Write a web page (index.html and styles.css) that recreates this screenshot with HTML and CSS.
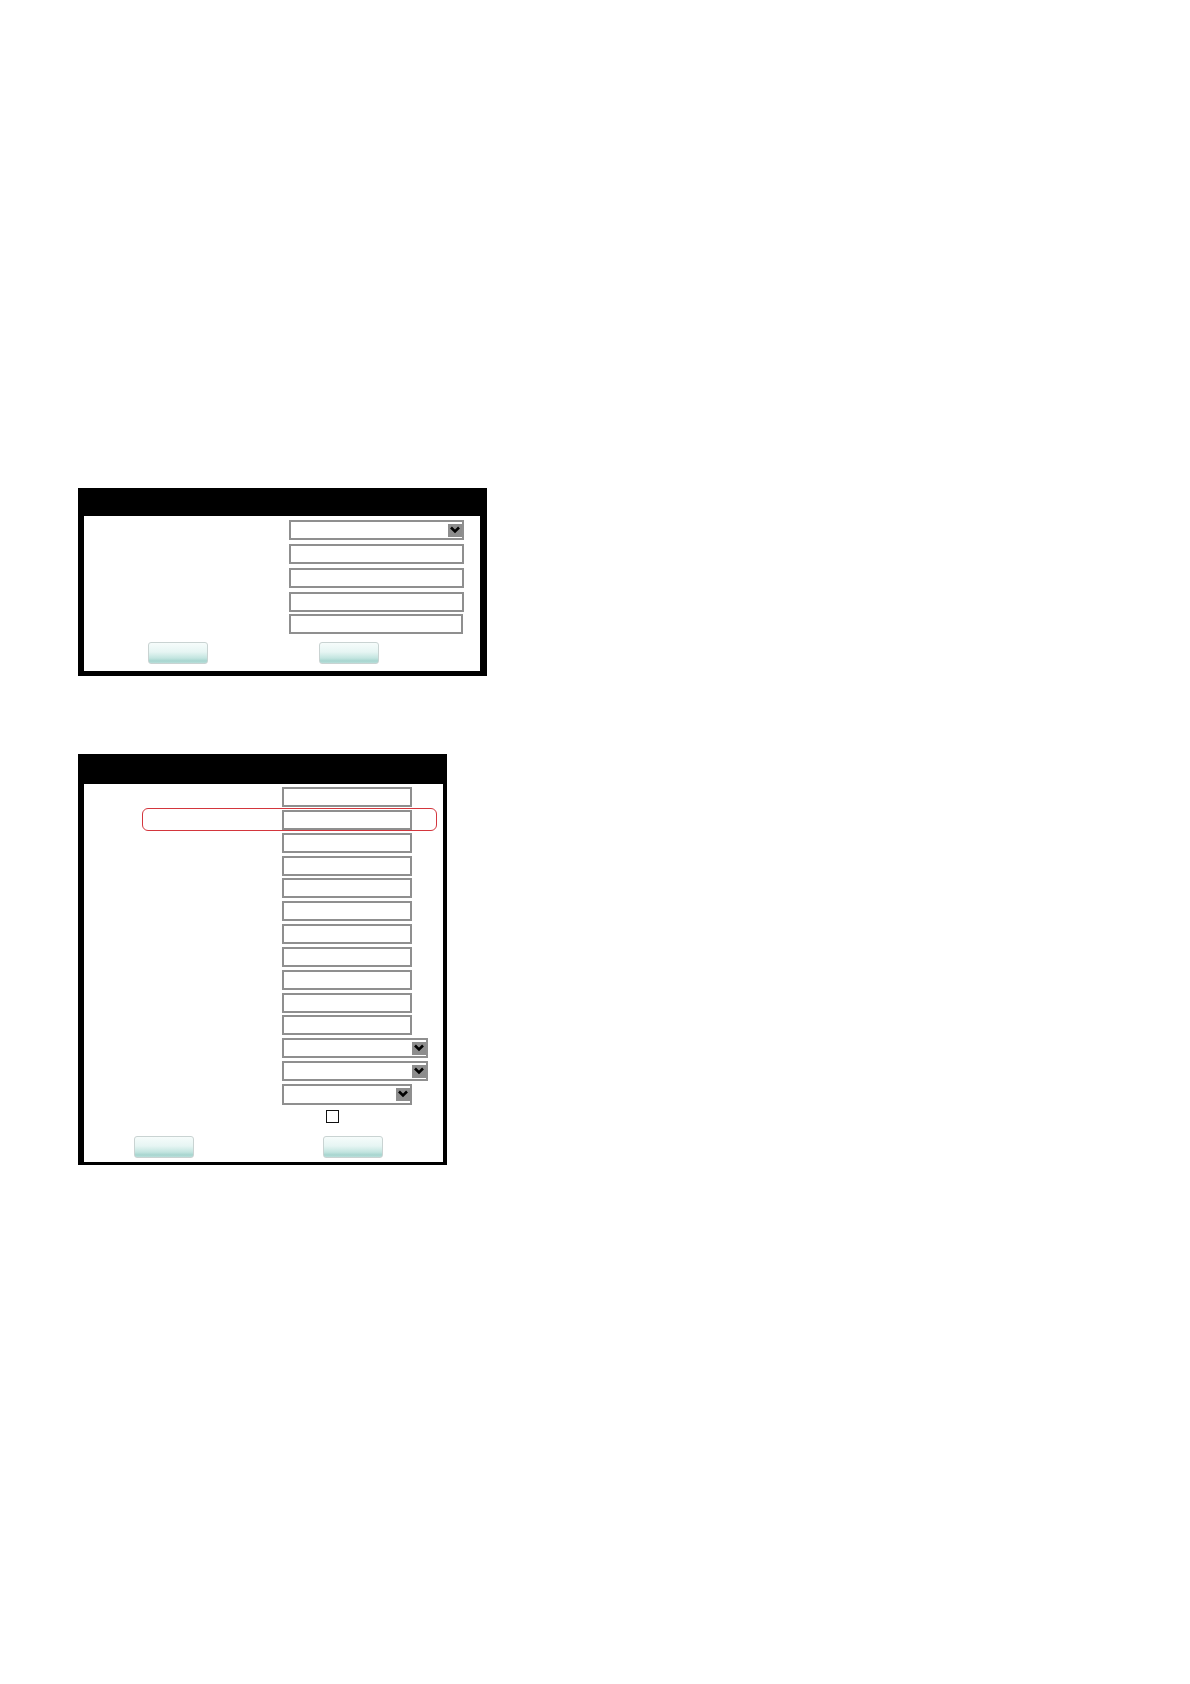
FILE: index.html
```html
<!DOCTYPE html>
<html lang="en">
<head>
<meta charset="utf-8">
<title>Forms</title>
<link rel="stylesheet" href="styles.css">
</head>
<body>
<div class="page">
  <section class="panel panel-a">
    <div class="panel-head"></div>
    <div class="panel-body">
      <div class="fields">
        <div class="select w175"><span class="arrow"><svg viewBox="0 0 12 10" width="12" height="10"><path d="M2 2.5 L6 6.5 L10 2.5" fill="none" stroke="#000" stroke-width="2.6"/></svg></span></div>
        <input class="text w175" type="text">
        <input class="text w175" type="text">
        <input class="text w175" type="text">
        <input class="text w174 tight" type="text">
      </div>
      <div class="buttons">
        <span class="btn b1"></span>
        <span class="btn b2"></span>
      </div>
    </div>
  </section>

  <section class="panel panel-b">
    <div class="panel-head"></div>
    <div class="panel-body">
      <div class="fields">
        <input class="text w130" type="text">
        <div class="row-hl"><input class="text w130" type="text"><span class="highlight"></span></div>
        <input class="text w130" type="text">
        <input class="text w130" type="text">
        <input class="text w130" type="text">
        <input class="text w130" type="text">
        <input class="text w130" type="text">
        <input class="text w130" type="text">
        <input class="text w130" type="text">
        <input class="text w130" type="text">
        <input class="text w130" type="text">
        <div class="select w146"><span class="arrow"><svg viewBox="0 0 12 10" width="12" height="10"><path d="M2 2.5 L6 6.5 L10 2.5" fill="none" stroke="#000" stroke-width="2.6"/></svg></span></div>
        <div class="select w146"><span class="arrow"><svg viewBox="0 0 12 10" width="12" height="10"><path d="M2 2.5 L6 6.5 L10 2.5" fill="none" stroke="#000" stroke-width="2.6"/></svg></span></div>
        <div class="select w130 tall"><span class="arrow"><svg viewBox="0 0 12 10" width="12" height="10"><path d="M2 2.5 L6 6.5 L10 2.5" fill="none" stroke="#000" stroke-width="2.6"/></svg></span></div>
        <span class="check"></span>
      </div>
      <div class="buttons">
        <span class="btn c1"></span>
        <span class="btn c2"></span>
      </div>
    </div>
  </section>
</div>
</body>
</html>
```

FILE: styles.css
```css
html, body {
  margin: 0;
  padding: 0;
  background: #ffffff;
  font-family: "Liberation Sans", Arial, sans-serif;
}

.page {
  padding: 488px 0 0 78px;
  display: flex;
  flex-direction: column;
  align-items: flex-start;
}

.panel {
  background: #ffffff;
  border-style: solid;
  border-color: #000000;
  box-sizing: border-box;
}

.panel-head {
  background: #000000;
}

.panel-a {
  width: 409px;
  border-width: 0 7px 5px 6px;
}
.panel-a .panel-head { height: 28px; margin: 0 -7px 0 -6px; }
.panel-a .panel-body { height: 155px; padding-top: 4px; box-sizing: border-box; }
.panel-a .fields { margin-left: 205px; gap: 4px; }
.panel-a .buttons { margin-top: 8px; }

.panel-b {
  width: 369px;
  margin-top: 78px;
  border-width: 0 4px 3px 6px;
}
.panel-b .panel-head { height: 30px; margin: 0 -4px 0 -6px; }
.panel-b .panel-body { height: 378px; padding-top: 3px; box-sizing: border-box; }
.panel-b .fields { margin-left: 198px; gap: 2.85px; }
.panel-b .buttons { margin-top: 13px; }

.fields {
  display: flex;
  flex-direction: column;
  align-items: flex-start;
}

.text, .select {
  display: block;
  box-sizing: border-box;
  height: 20px;
  margin: 0;
  padding: 0;
  border: 2px solid #8f8f8f;
  background: #ffffff;
  outline: none;
}

.tight { margin-top: -2px; }

.w175 { width: 175px; }
.w174 { width: 174px; }
.w146 { width: 146px; }
.w130 { width: 130px; }
.tall { height: 21px; }

.select {
  display: flex;
  justify-content: flex-end;
  align-items: center;
}

.arrow {
  width: 14px;
  height: 13px;
  background: #8d8d8d;
  display: flex;
  align-items: center;
  justify-content: center;
}
.arrow svg { display: block; }

.row-hl {
  position: relative;
}
.highlight {
  position: absolute;
  left: -140px;
  top: -2px;
  width: 295px;
  height: 23px;
  box-sizing: border-box;
  border: 1.5px solid #d3363d;
  border-radius: 6px;
  pointer-events: none;
}

.check {
  display: block;
  width: 13px;
  height: 13px;
  box-sizing: border-box;
  border: 1px solid #111111;
  margin-left: 44px;
  margin-top: 2.3px;
}

.buttons {
  position: relative;
  height: 23px;
  display: flex;
}

.btn {
  display: block;
  width: 60px;
  height: 22px;
  box-sizing: border-box;
  border: 1px solid #c9d3d2;
  border-radius: 3px;
  background: linear-gradient(to bottom, #f6fcfb 0%, #e6f5f3 45%, #c3e5e0 75%, #a7d5cf 90%, #b9dfda 100%);
}

.b1 { margin-left: 64px; }
.b2 { margin-left: 111px; }
.c1 { margin-left: 50px; }
.c2 { margin-left: 129px; }
```
